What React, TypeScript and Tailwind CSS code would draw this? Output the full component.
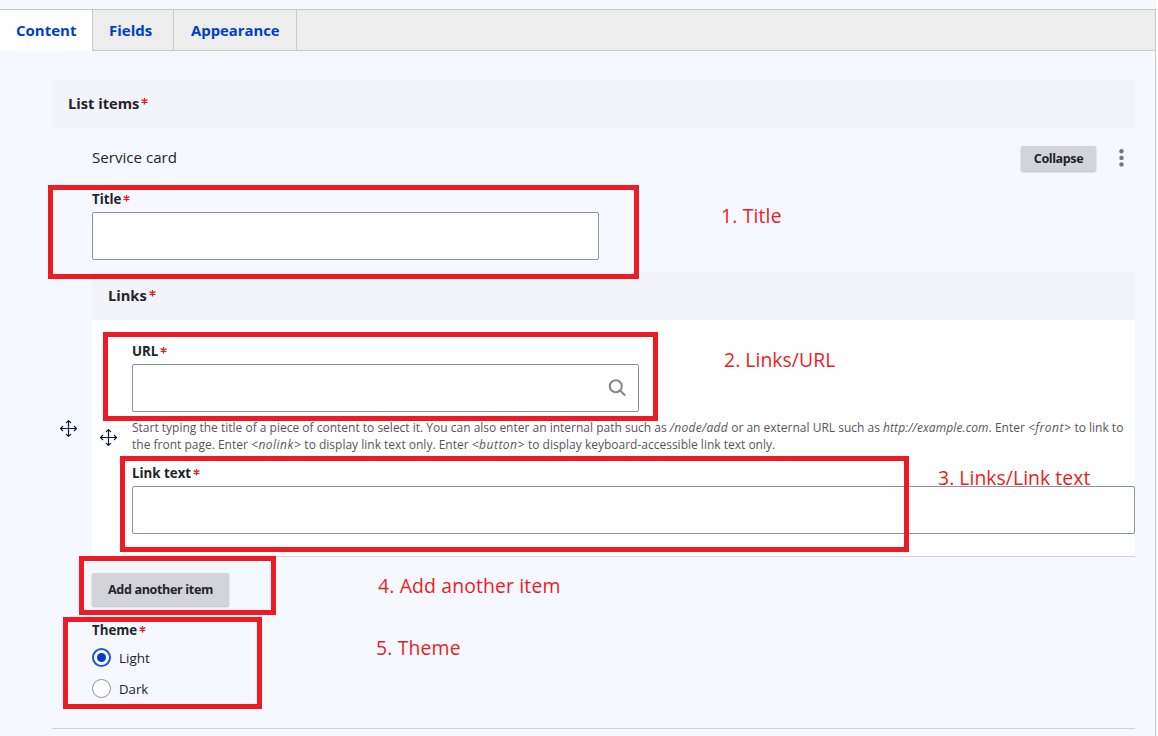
import React from "react";

function Required() {
  return (
    <svg className="mt-[5px] ml-[2px] h-[7px] w-[7px] shrink-0" viewBox="0 0 7 7" fill="none" stroke="#dc2323" strokeWidth="1.3">
      <path d="M3.5 0v6.4M0.6 1.6l5.8 3M6.4 1.6L0.6 4.6" />
    </svg>
  );
}

function Label({ children }: { children: React.ReactNode }) {
  return (
    <div className="flex h-[18px] items-start text-[13.3px] leading-[18px] font-bold whitespace-nowrap text-[#232429]">
      {children}
      <Required />
    </div>
  );
}

function Header({ children }: { children: React.ReactNode }) {
  return (
    <div className="flex h-12 shrink-0 items-center bg-[#f3f4f9] pb-[2px] pl-4 text-[14.65px] leading-[20px] font-bold text-[#232429]">
      <span className="flex">
        {children}
        <Required />
      </span>
    </div>
  );
}

function MoveIcon() {
  return (
    <svg className="h-[17px] w-[17px] shrink-0" viewBox="0 0 17 17" fill="none" stroke="#0b1739" strokeWidth="1.2" strokeLinecap="round" strokeLinejoin="round">
      <path d="M8.5 0.7v15.6M0.7 8.5h15.6M6.3 2.6L8.5 0.6l2.2 2M6.3 14.4l2.2 2 2.2-2M2.6 6.3L0.6 8.5l2 2.2M14.4 6.3l2 2.2-2 2.2" />
    </svg>
  );
}

const field = "h-12 rounded-[2px] border border-[#8e929c] bg-white outline-none";
const frame = "pointer-events-none absolute border-[5px] border-[#ed1c24]";
const note = "pointer-events-none absolute text-[19.4px] leading-[26px] whitespace-nowrap text-[#ed1c24]";

export default function App() {
  return (
    <div className="relative h-[736px] w-[1158px] overflow-hidden bg-white font-['Open_Sans','Noto_Sans',sans-serif]">
      <div className="flex h-full w-[1156px] flex-col bg-[#f5f8ff]">
        <div className="h-[9px] shrink-0" />
        <div className="flex flex-1 flex-col border-t border-r border-[#c9c9c9]">
          <nav className="flex h-[41px] shrink-0 bg-[#ededed] text-[15px] leading-[20px] font-bold text-[#003ecc]">
            <a className="flex w-[93px] items-center border-r border-[#c9c9c9] bg-white pb-[2px] pl-4">Content</a>
            <a className="flex w-[81px] items-center border-r border-b border-[#c9c9c9] pb-px pl-4">Fields</a>
            <a className="flex w-[123px] items-center border-r border-b border-[#c9c9c9] pb-px pl-[17px] text-[14.85px]">Appearance</a>
            <span className="flex-1 border-b border-[#c9c9c9]" />
          </nav>

          <main className="mt-[29px] ml-[52px] flex w-[1083px] flex-col">
            <Header>List items</Header>
            <div className="flex h-[601px] shrink-0 border-b border-[#d3d4d9]">
              <div className="w-10 shrink-0 pt-[292px] pl-2">
                <MoveIcon />
              </div>
              <div className="flex w-[1043px] flex-col">
                <div className="flex h-[62px] shrink-0 items-center pb-[2px] text-[#232429]">
                  <span className="flex-1 pb-[2px] text-[15.1px]">Service card</span>
                  <button className="mr-[23px] h-[25px] w-[75px] rounded-[2px] bg-[#d3d4d9] text-[12.6px] leading-[25px] font-bold tracking-[-0.42px] shadow-[0_1px_2px_rgba(0,0,0,0.25)]">Collapse</button>
                  <svg className="mr-[11px] h-[18px] w-[5px]" viewBox="0 0 5 18" fill="#75767b">
                    <circle cx="2.5" cy="2.3" r="2.2" />
                    <circle cx="2.5" cy="8.9" r="2.2" />
                    <circle cx="2.5" cy="15.4" r="2.2" />
                  </svg>
                </div>
                <Label>Title</Label>
                <input aria-label="Title" className={`${field} mt-1 w-[507px]`} />

                <section className="mt-3 flex flex-col border-b border-[#d3d4d9] bg-white">
                  <Header>Links</Header>
                  <div className="flex h-[236px]">
                    <div className="w-10 shrink-0 pt-[109px] pl-2">
                      <MoveIcon />
                    </div>
                    <div className="flex flex-1 flex-col pt-[22px]">
                      <Label>URL</Label>
                      <div className={`${field} mt-1 flex w-[507px] items-center justify-end pr-3`}>
                        <svg className="h-[18px] w-[18px]" viewBox="0 0 18 18" fill="none" stroke="#868686" strokeWidth="2">
                          <circle cx="7.8" cy="7.2" r="6" />
                          <path d="M12.1 11.5l5 5" />
                        </svg>
                      </div>
                      <p className="mt-[7px] text-[12px] leading-[17px] whitespace-nowrap text-[#55565b]">
                        Start typing the title of a piece of content to select it. You can also enter an internal path such as <em className="tracking-[0.3px]">/node/add</em> or an external URL such as <em className="tracking-[0.1px]">http://example.com</em>. Enter <em className="tracking-[0.5px]">&lt;front&gt;</em> to link to<br />
                        the front page. Enter <em className="tracking-[0.5px]">&lt;nolink&gt;</em> to display link text only. Enter <em className="tracking-[0.5px]">&lt;button&gt;</em> to display keyboard-accessible link text only.
                      </p>
                      <div className="mt-[11px]">
                        <Label>Link text</Label>
                      </div>
                      <input aria-label="Link text" className={`${field} mt-1 w-full`} />
                    </div>
                  </div>
                </section>

                <button className="mt-4 h-[33px] w-[137px] shrink-0 rounded-[2px] bg-[#d3d4d9] text-[12.6px] leading-[33px] font-bold tracking-[-0.36px] text-[#232429] shadow-[0_1px_2px_rgba(0,0,0,0.25)]">Add another item</button>
                <div className="mt-[15px]">
                  <Label>Theme</Label>
                </div>
                <label className="mt-[9px] flex h-[19px] items-center gap-2 text-[13.5px] text-[#232429]">
                  <span className="flex h-[19px] w-[19px] items-center justify-center rounded-full border-2 border-[#1e56d0] bg-white">
                    <span className="h-[9px] w-[9px] rounded-full bg-[#003ecc]" />
                  </span>
                  <span className="pt-[2px]">Light</span>
                </label>
                <label className="mt-3 flex h-[19px] items-center gap-2 text-[13.2px] text-[#232429]">
                  <span className="h-[19px] w-[19px] rounded-full border border-[#8e929c] bg-white" />
                  <span className="pt-[2px]">Dark</span>
                </label>
              </div>
            </div>
          </main>
        </div>
      </div>

      <div className={`${frame} top-[185px] left-[48px] h-[94px] w-[591px]`} />
      <div className={`${frame} top-[332px] left-[103px] h-[89px] w-[555px]`} />
      <div className={`${frame} top-[456px] left-[120px] h-[96px] w-[789px]`} />
      <div className={`${frame} top-[556px] left-[79px] h-[59px] w-[197px]`} />
      <div className={`${frame} top-[617px] left-[63px] h-[92px] w-[199px]`} />
      <span className={`${note} top-[203px] left-[721px] tracking-[0.15px]`}>1. Title</span>
      <span className={`${note} top-[347px] left-[724px] tracking-[0.04px]`}>2. Links/URL</span>
      <span className={`${note} top-[465px] left-[938px] tracking-[0.04px]`}>3. Links/Link text</span>
      <span className={`${note} top-[573px] left-[378px] tracking-[0.14px]`}>4. Add another item</span>
      <span className={`${note} top-[635px] left-[376px] tracking-[0.15px]`}>5. Theme</span>
    </div>
  );
}
